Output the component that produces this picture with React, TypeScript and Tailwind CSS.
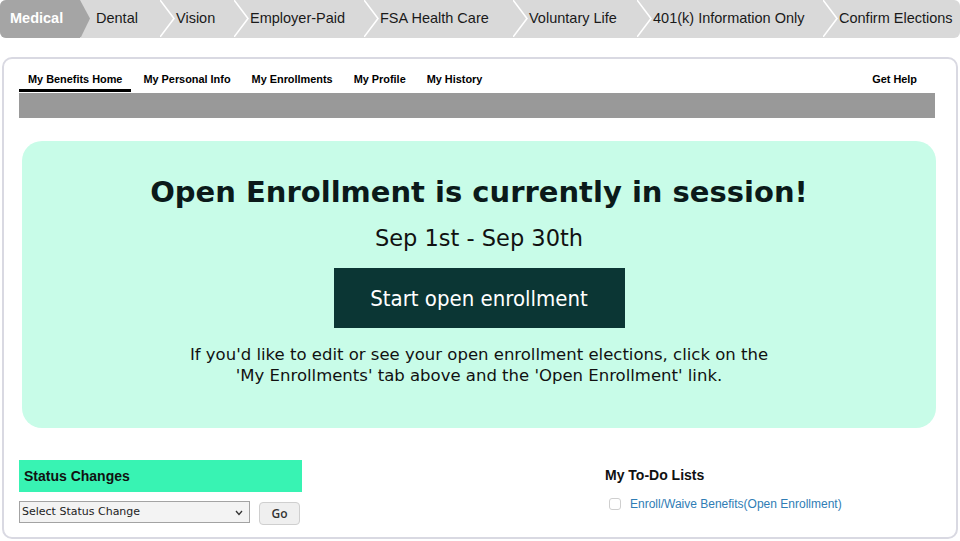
import React from 'react';

const STEPS = [
  { label: 'Dental', width: 'w-[80px]' },
  { label: 'Vision', width: 'w-[74px]' },
  { label: 'Employer-Paid', width: 'w-[130px]' },
  { label: 'FSA Health Care', width: 'w-[149px]' },
  { label: 'Voluntary Life', width: 'w-[124px]' },
  { label: '401(k) Information Only', width: 'w-[186px]' },
  { label: 'Confirm Elections', width: 'flex-1' },
];

const TABS = ['My Benefits Home', 'My Personal Info', 'My Enrollments', 'My Profile', 'My History'];

const Chevron: React.FC<{ filled?: boolean }> = ({ filled }) => (
  <svg className="absolute left-0 top-0" width="16" height="37" viewBox="0 0 16 37" aria-hidden="true">
    {filled ? (
      <path d="M0 0 L10 18.5 L1 37 L0 37 Z" fill="#a5a5a5" />
    ) : (
      <path d="M0 0 L14 18.5 L0 37" fill="none" stroke="#ffffff" strokeWidth="1.6" />
    )}
  </svg>
);

export default function App() {
  return (
    <div className="w-[960px] h-[541px] bg-white overflow-hidden font-['Liberation_Sans',Arial,sans-serif] text-[#1a1a1a]">
      {/* Wizard steps */}
      <div className="flex h-[38px] rounded-md overflow-hidden bg-[#d9d9d9] text-[14.5px]">
        <div className="w-[80px] bg-[#a5a5a5] pl-[10px] flex items-center font-bold text-white">Medical</div>
        {STEPS.map((step, i) => (
          <div key={step.label} className={`relative ${step.width} pl-[16px] flex items-center whitespace-nowrap`}>
            <Chevron filled={i === 0} />
            <span className="relative">{step.label}</span>
          </div>
        ))}
      </div>

      {/* Main card */}
      <div className="mt-[19px] mx-[2px] h-[482px] rounded-[10px] border-2 border-[#d9d9e2] pt-[8px] pl-[15px] pr-[21px]">
        <nav className="flex items-end text-[10.9px] font-bold text-black">
          {TABS.map((tab, i) => (
            <div
              key={tab}
              className={`h-[25px] px-[9px] mr-[3px] flex items-center ${i === 0 ? 'border-b-[3px] border-black pt-[3px]' : ''}`}
            >
              {tab}
            </div>
          ))}
          <div className="ml-auto h-[25px] pr-[18px] flex items-center">Get Help</div>
        </nav>
        <div className="mt-px h-[25px] bg-[#999999]" />

        {/* Open enrollment banner */}
        <section className="mt-[23px] ml-[3px] mr-[-1px] h-[287px] rounded-[20px] bg-[#c8fce8] flex flex-col items-center pt-[33px] font-['DejaVu_Sans',Verdana,sans-serif]">
          <h1 className="text-[29px] leading-[36px] font-bold text-[#0b1a1a]">Open Enrollment is currently in session!</h1>
          <p className="mt-[14px] text-[22.5px] leading-[28px] text-[#111]">Sep 1st - Sep 30th</p>
          <button className="mt-[16px] w-[291px] h-[60px] bg-[#0b3634] text-white text-[22px] font-['DejaVu_Sans_Condensed','DejaVu_Sans',sans-serif]">
            Start open enrollment
          </button>
          <p className="mt-[16px] text-[16.5px] leading-[21px] text-center text-[#111]">
            If you'd like to edit or see your open enrollment elections, click on the
            <br />
            'My Enrollments' tab above and the 'Open Enrollment' link.
          </p>
        </section>

        {/* Bottom area */}
        <div className="mt-[32px] flex">
          <div className="w-[283px]">
            <div className="h-[32px] bg-[#38f3b3] pl-[5px] flex items-center text-[14px] font-bold text-[#111]">Status Changes</div>
            <div className="mt-[9px] flex items-start">
              <div className="w-[231px] h-[22px] border border-[#a3a3a3] bg-[#f3f3f3] flex items-center justify-between pl-[2px] pr-[6px] pt-px text-[11px] text-[#222] font-['DejaVu_Sans',Verdana,sans-serif]">
                <span>Select Status Change</span>
                <svg width="8" height="6" viewBox="0 0 8 6" aria-hidden="true">
                  <path d="M1 1 L4 4.5 L7 1" fill="none" stroke="#333" strokeWidth="1.3" />
                </svg>
              </div>
              <button className="ml-[9px] mt-px w-[41px] h-[23px] rounded-sm border border-[#cfcfcf] bg-[#efefef] text-[12px] font-semibold text-[#333] font-['Open_Sans','DejaVu_Sans',sans-serif]">
                Go
              </button>
            </div>
          </div>
          <div className="ml-[303px] pt-[7px]">
            <h3 className="text-[14px] leading-[16px] font-bold text-[#111]">My To-Do Lists</h3>
            <div className="mt-[12px] ml-[4px] flex items-center gap-[9px]">
              <span className="w-[12px] h-[12px] rounded-[3px] border border-[#cfcfcf] bg-white" />
              <a className="text-[12px] text-[#2f7db5]">Enroll/Waive Benefits(Open Enrollment)</a>
            </div>
          </div>
        </div>
      </div>
    </div>
  );
}
